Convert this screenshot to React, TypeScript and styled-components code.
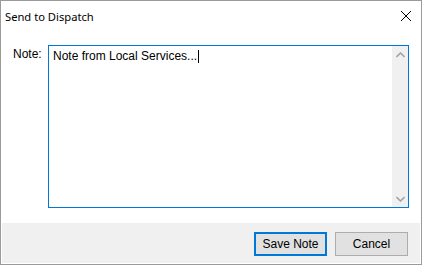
import React from "react";
import styled, { createGlobalStyle } from "styled-components";

const Global = createGlobalStyle`
  html, body { margin: 0; padding: 0; background: #ffffff; }
  #root { width: 422px; height: 265px; }
`;

const Window = styled.div`
  box-sizing: border-box;
  width: 422px;
  height: 265px;
  border: 1px solid #9b9b9b;
  background: #ffffff;
  display: flex;
  flex-direction: column;
  font-family: "Liberation Sans", Arial, sans-serif;
  font-size: 12px;
  color: #000;
`;

const TitleBar = styled.div`
  height: 30px;
  flex: none;
  display: flex;
  align-items: center;
  justify-content: space-between;
  padding: 0 10px 0 4px;
`;

const Title = styled.span`
  font-family: "Noto Sans", "Open Sans", sans-serif;
  font-size: 11.2px;
  color: #000;
`;

const CloseButton = styled.div`
  width: 10px;
  height: 10px;
  display: flex;
  svg { display: block; }
`;

const Body = styled.div`
  flex: 1;
  display: flex;
  padding: 14px 12px 15px 12px;
  gap: 6px;
`;

const Label = styled.div`
  width: 29px;
  flex: none;
  padding-top: 2px;
  line-height: 14px;
`;

const TextBox = styled.div`
  flex: 1;
  display: flex;
  border: 1px solid #0078d7;
  background: #fff;
`;

const TextArea = styled.div`
  flex: 1;
  padding: 3px 4px;
  line-height: 14px;
  white-space: pre;
`;

const Caret = styled.span`
  display: inline-block;
  width: 1px;
  height: 13px;
  background: #000;
  vertical-align: -3px;
  margin-left: 1px;
`;

const ScrollBar = styled.div`
  width: 16px;
  flex: none;
  background: #f0f0f0;
  display: flex;
  flex-direction: column;
  justify-content: space-between;
`;

const ScrollArrow = styled.div`
  height: 17px;
  display: flex;
  align-items: center;
  justify-content: center;
`;

const Footer = styled.div`
  height: 40px;
  flex: none;
  margin: 0 1px 1px 1px;
  background: #f0f0f0;
  display: flex;
  justify-content: flex-end;
  align-items: flex-start;
  gap: 8px;
  padding: 9px 12px 0 0;
  box-sizing: border-box;
`;

const Button = styled.div<{ $default?: boolean }>`
  box-sizing: border-box;
  width: 73px;
  height: 24px;
  background: #e1e1e1;
  border: ${(p) => (p.$default ? "2px solid #0078d7" : "1px solid #adadad")};
  display: flex;
  align-items: center;
  justify-content: center;
  font-size: 12px;
  color: #000;
`;

const Chevron = ({ up }: { up?: boolean }) => (
  <svg width="9" height="6" viewBox="0 0 9 6">
    <path
      d={up ? "M0.5 5 L4.5 1 L8.5 5" : "M0.5 1 L4.5 5 L8.5 1"}
      fill="none"
      stroke="#a3a3a3"
      strokeWidth="1.6"
    />
  </svg>
);

export default function App() {
  return (
    <>
      <Global />
      <Window>
        <TitleBar>
          <Title>Send to Dispatch</Title>
          <CloseButton>
            <svg width="10" height="10" viewBox="0 0 10 10">
              <path d="M0 0 L10 10 M10 0 L0 10" stroke="#000" strokeWidth="1" />
            </svg>
          </CloseButton>
        </TitleBar>
        <Body>
          <Label>Note:</Label>
          <TextBox>
            <TextArea>
              Note from Local Services...
              <Caret />
            </TextArea>
            <ScrollBar>
              <ScrollArrow>
                <Chevron up />
              </ScrollArrow>
              <ScrollArrow>
                <Chevron />
              </ScrollArrow>
            </ScrollBar>
          </TextBox>
        </Body>
        <Footer>
          <Button $default>Save Note</Button>
          <Button>Cancel</Button>
        </Footer>
      </Window>
    </>
  );
}
